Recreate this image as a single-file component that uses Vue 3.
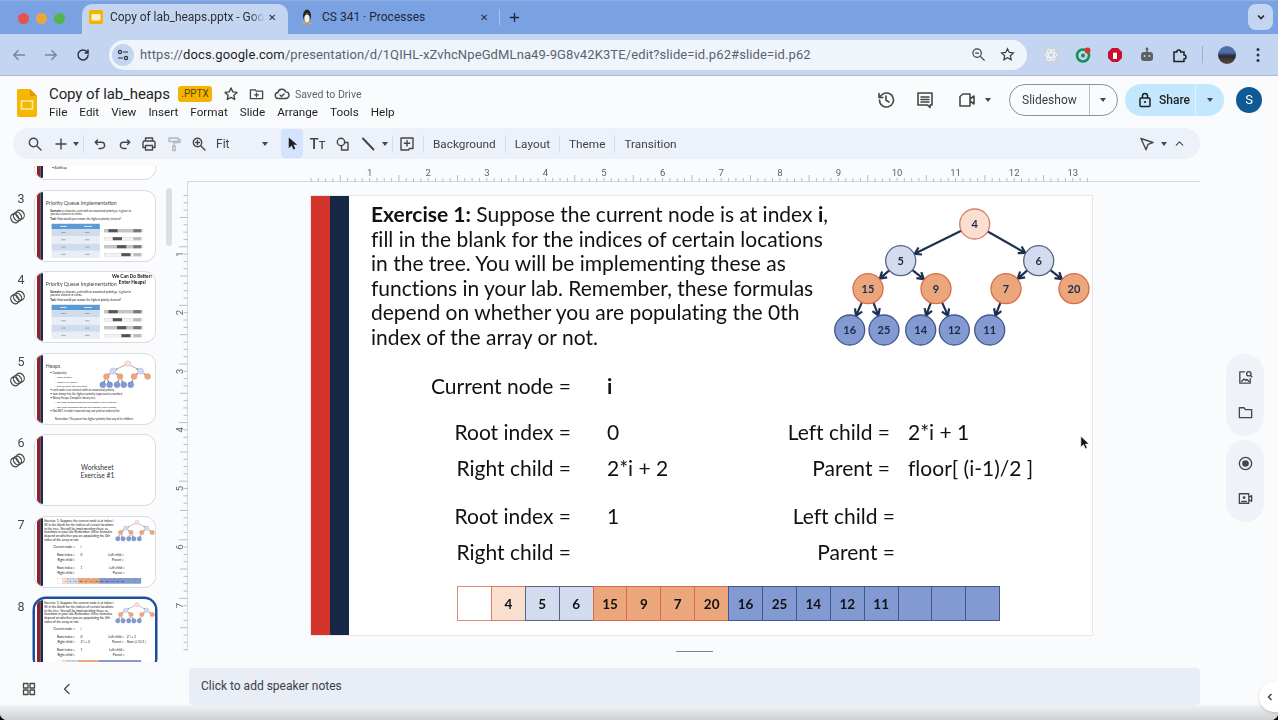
<template>
  <div class="window">
    <!-- browser tabs -->
    <div class="tabstrip">
      <div class="traffic"><i class="red"></i><i class="amber"></i><i class="green"></i></div>
      <div class="tab active">
        <svg class="favicon" viewBox="0 0 14 14"><rect width="14" height="14" rx="2" fill="#f4b400"/><rect x="2.5" y="4" width="9" height="6.5" rx=".6" fill="#fdf3d0"/></svg>
        <span class="tab-title fade">Copy of lab_heaps.pptx - Goo</span>
        <span class="tab-x">✕</span>
      </div>
      <div class="tab second-tab">
        <svg class="favicon" viewBox="0 0 14 16">
          <ellipse cx="7" cy="7" rx="4" ry="6.5" fill="#222"/><ellipse cx="7" cy="9.5" rx="2.7" ry="4" fill="#f4f1e6"/>
          <path d="M1.5 15 5 12.5 6 15.5zM12.5 15 9 12.5 8 15.5z" fill="#eda81f"/><path d="M6 4.2h2L7 5.4z" fill="#eda81f"/>
        </svg>
        <span class="tab-title">CS 341 · Processes</span>
        <span class="tab-x">✕</span>
      </div>
      <span class="tab-sep"></span>
      <svg class="new-tab" viewBox="0 0 12 12"><path d="M6 1v10M1 6h10"/></svg>
      <div class="tab-menu"><svg viewBox="0 0 12 12"><path d="m3 4.5 3 3 3-3"/></svg></div>
    </div>

    <!-- address bar -->
    <div class="addressbar">
      <svg class="nav dim" viewBox="0 0 16 16"><path d="M14 8H3M7.5 3.2 2.8 8l4.7 4.8"/></svg>
      <svg class="nav dim" viewBox="0 0 16 16"><path d="M2 8h11M8.5 3.2 13.2 8l-4.7 4.8"/></svg>
      <svg class="nav" viewBox="0 0 16 16"><path d="M13 8a5 5 0 1 1-1.5-3.6L13 6V2.5M13 6H9.6"/></svg>
      <div class="omnibox">
        <span class="site-info">
          <svg viewBox="0 0 14 14"><circle cx="4" cy="4" r="1.6"/><path d="M7 4h5M2 10h5"/><circle cx="10" cy="10" r="1.6"/></svg>
        </span>
        <span class="url">https://<b>docs.google.com</b>/presentation/d/1QIHL-xZvhcNpeGdMLna49-9G8v42K3TE/edit?slide=id.p62#slide=id.p62</span>
        <svg class="omni-icon first" viewBox="0 0 16 16"><circle cx="6.5" cy="6.5" r="4.5"/><path d="m10 10 4.5 4.5M4.5 6.5h4"/></svg>
        <svg class="omni-icon" viewBox="0 0 16 16"><path d="m8 1.8 1.9 4 4.4.5-3.3 3 .9 4.4L8 11.5l-3.9 2.2.9-4.4-3.3-3 4.4-.5z"/></svg>
      </div>
      <div class="extensions">
        <span class="ext"><svg viewBox="0 0 16 16"><rect width="16" height="16" rx="1" fill="#c9d2e0"/><g fill="none" stroke="#f3f6fb"><ellipse cx="8" cy="8" rx="6" ry="2.4"/><ellipse cx="8" cy="8" rx="6" ry="2.4" transform="rotate(60 8 8)"/><ellipse cx="8" cy="8" rx="6" ry="2.4" transform="rotate(120 8 8)"/></g></svg></span>
        <span class="ext"><svg viewBox="0 0 16 16"><circle cx="8" cy="8.5" r="6" fill="none" stroke="#12925a" stroke-width="2.6"/><circle cx="8" cy="8.5" r="2" fill="#12925a"/><circle cx="12.5" cy="3.5" r="3" fill="#d9352f"/></svg></span>
        <span class="ext"><svg viewBox="0 0 16 16"><path d="M5 1h6l4 4v6l-4 4H5l-4-4V5z" fill="#c8102e"/><path d="M6 12V6.5a1 1 0 0 1 2 0 1 1 0 0 1 2 0V12z" fill="#fff"/></svg></span>
        <span class="ext"><svg viewBox="0 0 16 16"><rect x="2" y="5" width="12" height="9" rx="3" fill="#5c6168"/><rect x="7.2" y="2" width="1.6" height="3" fill="#5c6168"/><circle cx="8" cy="2" r="1.4" fill="#5c6168"/><circle cx="5.6" cy="9" r="1" fill="#c3d5f1"/><circle cx="10.4" cy="9" r="1" fill="#c3d5f1"/></svg></span>
        <span class="ext"><svg viewBox="0 0 16 16"><path d="M3 5h2.8a2 2 0 1 1 4 0H13v3a2 2 0 1 1 0 4v2.5H3z" fill="none" stroke="#1f1f1f" stroke-width="1.5"/></svg></span>
        <span class="ext-sep"></span>
        <span class="profile"></span>
        <svg class="dots" viewBox="0 0 4 16"><circle cx="2" cy="2.5" r="1.5"/><circle cx="2" cy="8" r="1.5"/><circle cx="2" cy="13.5" r="1.5"/></svg>
      </div>
    </div>

    <!-- docs header -->
    <header class="docheader">
      <svg class="logo" viewBox="0 0 20 28"><path d="M2 0h11l7 7v19a2 2 0 0 1-2 2H2a2 2 0 0 1-2-2V2a2 2 0 0 1 2-2z" fill="#f6b704"/><path d="M13 0l7 7h-7z" fill="#f09300"/><rect x="4.5" y="12" width="11" height="8" fill="none" stroke="#fdeaa8" stroke-width="1.6"/></svg>
      <div class="doc-meta">
        <div class="doc-title-row">
          <span class="doc-title">Copy of lab_heaps</span>
          <span class="badge">.PPTX</span>
          <svg class="ic star" viewBox="0 0 16 16"><path d="m8 2 1.8 3.9 4.2.5-3.1 2.9.8 4.2L8 11.4l-3.7 2.1.8-4.2L2 6.4l4.2-.5z"/></svg>
          <svg class="ic folder" viewBox="0 0 16 16"><path d="M1.5 3.5h5l1.3 1.5h6.7v8h-13zM8 7v4M6 9h4"/></svg>
          <svg class="ic cloud" viewBox="0 0 16 16"><path d="M4.5 12.5a3 3 0 0 1-.5-6 4 4 0 0 1 7.7-.6 3.3 3.3 0 0 1 0 6.6zM6 9l1.5 1.5L10 8"/></svg>
          <span class="saved">Saved to Drive</span>
        </div>
        <nav class="menu"><span v-for="m in menus" :key="m">{{ m }}</span></nav>
      </div>
      <div class="doc-actions">
        <svg class="ic big" viewBox="0 0 20 20"><path d="M3.5 10a7 7 0 1 0 2.1-5L3 7.5M3 3.5v4h4M10 6v4.3l3 1.7"/></svg>
        <svg class="ic big comment" viewBox="0 0 20 20"><path d="M3 3h14v12h-2v2.500l-2.500-2.500H3zM6 7h8M6 9.500h8M6 12h8"/></svg>
        <svg class="ic big meet" viewBox="0 0 20 20"><path d="M3 6.500 6 4h7v12H3zM13 9l4-3v8l-4-3"/></svg>
        <span class="caret meet-caret"></span>
        <div class="slideshow"><span class="ss-label">Slideshow</span><span class="ss-drop"><i class="caret"></i></span></div>
        <div class="share">
          <svg viewBox="0 0 14 16"><rect x="2" y="6" width="10" height="8.500" rx="1" fill="none" stroke="#1f1f1f" stroke-width="1.500"/><path d="M4.500 6V4a2.500 2.500 0 0 1 5 0v2" fill="none" stroke="#1f1f1f" stroke-width="1.500"/><circle cx="7" cy="10" r="1.100" fill="#1f1f1f"/></svg>
          <span class="share-label">Share</span>
          <span class="share-drop"><i class="caret"></i></span>
        </div>
        <span class="account">S</span>
      </div>
    </header>

    <!-- toolbar -->
    <div class="toolbar">
      <button class="tb"><svg class="ic" viewBox="0 0 16 16"><circle cx="6.500" cy="6.500" r="4.200"/><path d="m9.700 9.700 4.300 4.300"/></svg></button>
      <button class="tb plus"><svg class="ic" viewBox="0 0 16 16"><path d="M8 3v10M3 8h10"/></svg></button>
      <i class="caret tb-caret"></i>
      <span class="sep"></span>
      <button class="tb undo"><svg class="ic" viewBox="0 0 16 16"><path d="M5.500 4 3.200 6.300l2.300 2.300M3.500 6.300h6a3 3 0 0 1 0 6.200H7"/></svg></button>
      <button class="tb"><svg class="ic" viewBox="0 0 16 16"><path d="M10.500 4l2.300 2.300-2.300 2.300M12.500 6.300h-6a3 3 0 0 0 0 6.200H9"/></svg></button>
      <button class="tb print"><svg class="ic" viewBox="0 0 16 16"><path d="M4.500 5V2h7v3M4.500 11.500H2V6.500A1.500 1.500 0 0 1 3.500 5h9A1.500 1.500 0 0 1 14 6.500v5h-2.500M4.500 9.500h7V14h-7z"/></svg></button>
      <button class="tb"><svg class="ic faint" viewBox="0 0 16 16"><path d="M3 2h9v3.500H3zM12 3.500h2v3H8V10M6.800 10h2.400v4.500H6.800z"/></svg></button>
      <button class="tb"><svg class="ic" viewBox="0 0 16 16"><circle cx="6.500" cy="6.500" r="4.200"/><path d="m9.700 9.700 4.300 4.300M4.500 6.500h4M6.500 4.500v4"/></svg></button>
      <span class="fit">Fit</span>
      <i class="caret fit-caret"></i>
      <button class="tb pointer"><svg viewBox="0 0 16 16"><path d="M4 1.500v11.500l3-2.800 2 4.300 2-.9-2-4.200h4z" fill="#1f1f1f"/></svg></button>
      <button class="tb text-box"><span>T</span><small>T</small></button>
      <button class="tb"><svg class="ic" viewBox="0 0 16 16"><circle cx="6" cy="6" r="3.700"/><path d="M9.500 6.500H13V14H6.500V10"/></svg></button>
      <button class="tb"><svg class="ic thick" viewBox="0 0 16 16"><path d="m3 2.500 10.500 11"/></svg></button>
      <i class="caret line-caret"></i>
      <span class="sep line-sep"></span>
      <button class="tb addbox"><svg class="ic" viewBox="0 0 16 16"><path d="M2 2h12v10.500h-3.500l-1 1.500H2zM8 4.500v5.500M5.300 7.300h5.400"/></svg></button>
      <span class="sep"></span>
      <template v-for="(label, i) in toolLabels" :key="label">
        <span class="tool-label">{{ label }}</span>
        <span v-if="i < toolLabels.length - 1" class="sep"></span>
      </template>
      <div class="tb-right">
        <svg class="ic" viewBox="0 0 16 16"><path d="m2 2.500 12 4-5 1.800-2 5.500z"/></svg>
        <i class="caret"></i>
        <svg class="ic chev" viewBox="0 0 16 16"><path d="m4 10 4-4 4 4"/></svg>
      </div>
    </div>

    <!-- editor -->
    <div class="workspace">
      <aside class="filmstrip">
        <div class="thumb-list">
          <div v-for="t in thumbs" :key="t.n" class="thumb-row">
            <div class="thumb-side">
              <span v-if="t.n > 2" class="thumb-no">{{ t.n }}</span>
              <svg v-if="t.linked" class="rings" viewBox="0 0 18 16"><g transform="rotate(-35 9 8)" fill="none" stroke="#444746" stroke-width="1.300"><ellipse cx="5.500" cy="8" rx="4" ry="5"/><ellipse cx="9" cy="8" rx="4" ry="5"/><ellipse cx="12.500" cy="8" rx="4" ry="5"/></g></svg>
            </div>
            <div class="thumb" :class="{ selected: t.n === 8 }">
              <svg viewBox="0 0 781 439">
                <rect width="781" height="439" fill="#fff"/>
                <rect x="13" y="0" width="24" height="439" fill="#8a2530"/>
                <rect x="37" y="0" width="15" height="439" fill="#1a2a4a"/>
                <text v-if="t.kind === 'cut'" x="110" y="385" class="t-body">• BuildHeap</text>
                <g v-if="t.kind === 'queue'">
                  <text x="70" y="85" class="t-title">Priority Queue Implementation</text>
                  <text x="100" y="127" class="t-body"><tspan font-weight="700">Scenario:</tspan> n elements, each with an associated priority pᵢ, is given to</text>
                  <text x="100" y="148" class="t-body">you one element at a time.</text>
                  <text x="100" y="180" class="t-body"><tspan font-weight="700">Task:</tspan> How would you remove the highest priority element?</text>
                  <rect x="108" y="205" width="314" height="35" fill="#5b9bd5"/>
                  <rect x="165" y="219" width="40" height="6" fill="#e8f0fa"/>
                  <rect x="320" y="219" width="50" height="6" fill="#e8f0fa"/>
                  <g v-for="r in 4" :key="r">
                    <rect x="108" :y="193 + r * 47" width="314" height="47" :fill="r % 2 ? '#cfdcec' : '#e8eef6'"/>
                    <rect x="170" :y="213 + r * 47" width="30" height="5" fill="#8a97a8"/>
                    <rect x="325" :y="213 + r * 47" width="30" height="5" fill="#8a97a8"/>
                  </g>
                  <g v-for="r in 4" :key="'bar' + r">
                    <rect x="450" :y="188 + r * 52" width="250" height="20" :fill="r % 2 ? '#c4c4c4' : '#f2f2f2'" stroke="#999"/>
                    <rect :x="450 + r * 28" :y="188 + r * 52" width="60" height="20" fill="#555"/>
                    <rect x="640" :y="188 + r * 52" width="50" height="20" :fill="r % 2 ? '#777' : '#bbb'"/>
                  </g>
                  <g v-if="t.n === 4">
                    <text x="760" y="32" text-anchor="end" class="t-better">We Can Do Better!</text>
                    <text x="722" y="72" text-anchor="end" class="t-better">Enter Heaps!</text>
                  </g>
                </g>
                <g v-if="t.kind === 'heaps'">
                  <text x="70" y="85" class="t-title">Heaps</text>
                  <text v-for="(l, i) in heapsLines" :key="i" :x="l.x" :y="124 + i * 27" class="t-body" :class="{ 't-sub': l.x > 100 }">{{ l.text }}</text>
                  <text x="130" y="420" class="t-body" font-weight="700">Remember: The parent has higher priority than any of its children</text>
                </g>
                <g v-if="t.kind === 'worksheet'">
                  <text x="406" y="220" text-anchor="middle" class="t-sheet">Worksheet</text>
                  <text x="406" y="272" text-anchor="middle" class="t-sheet">Exercise #1</text>
                </g>
                <g v-if="t.kind === 'exercise'">
                  <text v-for="(line, i) in introLines" :key="i" x="60" :y="25 + i * 24.600" class="t-ex">{{ line }}</text>
                  <text v-for="(r, i) in thumbRows(t.n)" :key="i" :x="r.x" :y="r.y" :text-anchor="r.anchor" class="t-ex">{{ r.label }}</text>
                  <g v-for="(c, i) in cells" :key="i">
                    <rect :x="146 + i * 34" y="390" width="34" height="35" :fill="c.fill" :stroke="c.stroke"/>
                    <text :x="163 + i * 34" y="413" text-anchor="middle" class="t-cell">{{ c.v }}</text>
                  </g>
                </g>
                <g v-if="t.kind === 'exercise' || t.kind === 'heaps'" :transform="t.kind === 'heaps' ? 'translate(-259 18) scale(1.3)' : ''">
                  <path v-for="(e, i) in edges" :key="i" :d="e" fill="none" stroke="#1e3050" stroke-width="2"/>
                  <circle v-for="n in nodes" :key="n.v" :cx="n.x" :cy="n.y" r="15" :fill="n.fill" :stroke="n.stroke"/>
                </g>
              </svg>
            </div>
          </div>
        </div>
        <div class="strip-scroll"></div>
        <div class="strip-foot">
          <svg class="ic" viewBox="0 0 14 14"><path d="M1.500 1.500h4.500v4.500H1.500zM8 1.500h4.500v4.500H8zM1.500 8h4.500v4.500H1.500zM8 8h4.500v4.500H8z"/></svg>
          <svg class="ic back" viewBox="0 0 14 14"><path d="M9 2.500 4.500 7 9 11.500"/></svg>
        </div>
      </aside>

      <svg class="ruler-v" width="14" height="470" viewBox="0 0 14 470">
        <path d="M13.500 0v470" stroke="#d3d6dc" fill="none"/>
        <path v-for="k in 64" :key="k" :d="`M${k % 8 === 0 ? 5 : k % 4 === 0 ? 6 : 9.500} ${14.500 + (k - 1) * 7.325}H13.500`" stroke="#b9bcc2" fill="none"/>
        <text v-for="n in 7" :key="n" :transform="`translate(9 ${14.500 + n * 58.600}) rotate(-90)`" text-anchor="middle" class="ruler-text">{{ n }}</text>
      </svg>

      <div class="editor">
        <svg class="ruler-h" width="1012" height="22" viewBox="0 0 1012 22">
          <path d="M0 21.500h1012" stroke="#d3d6dc" fill="none"/>
          <path v-for="k in 107" :key="k" :d="`M${123 + (k - 1) * 7.325} ${(k - 1) % 8 === 4 ? 15 : 18}V21.500`" stroke="#b9bcc2" fill="none"/>
          <text v-for="n in 13" :key="n" :x="123 + n * 58.600" y="16" text-anchor="middle" class="ruler-text">{{ n }}</text>
        </svg>

        <section class="slide">
          <div class="stripes"><i class="stripe-red"></i><i class="stripe-navy"></i></div>
          <div class="slide-body">
            <div class="slide-top">
              <p class="intro">
                <template v-for="(line, i) in introMain" :key="i"><b v-if="line.lead">{{ line.lead }}</b> {{ line.text }}<b v-if="line.tail">{{ line.tail }}</b>{{ line.end }}<br></template>
              </p>
              <svg class="tree" width="261" height="160" viewBox="520 0 261 160">
                <path v-for="(e, i) in edges" :key="i" :d="e" fill="none" stroke="#1e3050" stroke-width="2.200"/>
                <g v-for="n in nodes" :key="n.v">
                  <circle :cx="n.x" :cy="n.y" r="15" :fill="n.fill" :stroke="n.stroke" stroke-width="1.300"/>
                  <text :x="n.x" :y="n.y + 4" text-anchor="middle" class="node-text">{{ n.v }}</text>
                </g>
              </svg>
            </div>

            <div class="row-grid current"><span class="lbl">Current node =</span><b class="val">i</b></div>
            <div class="row-grid first">
              <span class="lbl">Root index =</span><span class="val">0</span><span class="lbl">Left child =</span><span class="val end">2*i + 1</span>
              <span class="lbl">Right child =</span><span class="val">2*i + 2</span><span class="lbl">Parent =</span><span class="val end">floor[ (i-1)/2 ]</span>
            </div>
            <div class="row-grid second">
              <span class="lbl">Root index =</span><span class="val">1</span><span class="lbl">Left child =</span><span class="val end"></span>
              <span class="lbl">Right child =</span><span class="val"></span><span class="lbl">Parent =</span><span class="val end"></span>
            </div>

            <div class="heap-array">
              <span v-for="(c, i) in cells" :key="i" class="cell" :style="{ background: c.fill, borderColor: c.stroke }">{{ c.v }}</span>
            </div>
          </div>
        </section>

        <div class="notes-handle"></div>
        <div class="notes">Click to add speaker notes</div>
      </div>

      <aside class="rail">
        <div class="rail-pill">
          <svg class="ic" viewBox="0 0 18 18"><path d="M8 3H3v12h11V10M5 13l2.500-2.500 1.500 1.500 1.500-1 2 2"/><circle cx="12.500" cy="5" r="2.300"/><path d="m14.300 6.800 1.500 1.500"/></svg>
          <svg class="ic" viewBox="0 0 18 18"><path d="M2.500 4h5l1.500 2h6.500v8.500h-13z"/></svg>
        </div>
        <div class="rail-pill">
          <svg class="ic" viewBox="0 0 18 18"><circle cx="9" cy="9" r="6.500"/><circle cx="9" cy="9" r="3.500" fill="#444746" stroke="none"/></svg>
          <svg class="ic" viewBox="0 0 18 18"><path d="M2.500 4h10v10h-10zM12.500 8l3-2v6l-3-2"/><circle cx="7.500" cy="8" r="1.500" fill="#444746" stroke="none"/><path d="M5 12h5"/></svg>
        </div>
      </aside>
    </div>

    <div class="bottom-edge"></div>

    <!-- overlays -->
    <button class="collapse"><svg viewBox="0 0 12 12"><path d="M7.500 3 4.500 6l3 3"/></svg></button>
    <svg class="mouse" viewBox="0 0 12 18"><path d="M1 1v13l3.300-3 2.200 5 2.200-1-2.200-4.800H11z" fill="#111" stroke="#fff" stroke-width=".7"/></svg>
  </div>
</template>

<script setup>
const menus = ['File', 'Edit', 'View', 'Insert', 'Format', 'Slide', 'Arrange', 'Tools', 'Help']
const toolLabels = ['Background', 'Layout', 'Theme', 'Transition']

const introLines = [
  'Exercise 1: Suppose the current node is at index i,',
  'fill in the blank for the indices of certain locations',
  'in the tree. You will be implementing these as',
  'functions in your lab. Remember, these formulas',
  'depend on whether you are populating the 0th',
  'index of the array or not.'
]
const introMain = [
  { lead: 'Exercise 1:', text: 'Suppose the current node is at index ', tail: 'i', end: ',' },
  { text: 'fill in the blank for the indices of certain locations' },
  { text: 'in the tree. You will be implementing these as' },
  { text: 'functions in your lab. Remember, these formulas' },
  { text: 'depend on whether you are populating the 0th' },
  { text: 'index of the array or not.' }
]

const heapsLines = [
  { x: 100, text: '• Complexity' },
  { x: 130, text: '– insert:   O(log n)' },
  { x: 130, text: '– removeMin:   O(log n)' },
  { x: 130, text: '– buildUp heap: O(n) (One-time)' },
  { x: 100, text: '• each node is an element with an associated priority' },
  { x: 100, text: '• root always has the highest priority (expressed as number)' },
  { x: 100, text: '• Binary Heaps: Complete binary tree' },
  { x: 130, text: '– min-heap: minimum between two numbers, root is smallest' },
  { x: 130, text: '– max-heap: maximum between two numbers, root is largest' },
  { x: 100, text: '• Not BST: in-order traversal may not yield an ordered list' }
]

const palette = {
  peach: ['#f8dfd0', '#dc7b68'],
  light: ['#d3dcef', '#566483'],
  orange: ['#eca67b', '#d96a4c'],
  blue: ['#8299d2', '#41578a'],
  blank: ['#ffffff', '#dc8a7c']
}

const rawNodes = [
  [4, 663.7, 28, 'peach'], [5, 589.7, 64.7, 'light'], [6, 727.7, 64.7, 'light'],
  [15, 557, 92.7, 'orange'], [9, 625, 92.7, 'orange'], [7, 695, 92.7, 'orange'], [20, 763, 92.7, 'orange'],
  [16, 538.7, 134, 'blue'], [25, 573, 134, 'blue'], [14, 609.7, 134, 'blue'], [12, 643.3, 134, 'blue'], [11, 678.7, 134, 'blue']
]
const nodes = rawNodes.map(([v, x, y, c]) => ({ v, x, y, fill: palette[c][0], stroke: palette[c][1] }))

// parent -> child, shortened to the circle edge, with an open arrow head
const links = [[4, 5], [4, 6], [5, 15], [5, 9], [6, 7], [6, 20], [15, 16], [15, 25], [9, 14], [9, 12], [7, 11]]
const edges = links.map(([a, b]) => {
  const p = nodes.find(n => n.v === a)
  const c = nodes.find(n => n.v === b)
  const len = Math.hypot(c.x - p.x, c.y - p.y)
  const ux = (c.x - p.x) / len
  const uy = (c.y - p.y) / len
  const sx = p.x + ux * 15
  const sy = p.y + uy * 15
  const ex = c.x - ux * 15.5
  const ey = c.y - uy * 15.5
  const h = (ang) => {
    const cos = Math.cos(ang)
    const sin = Math.sin(ang)
    return `${ex - 7.5 * (ux * cos - uy * sin)} ${ey - 7.5 * (ux * sin + uy * cos)}`
  }
  return `M${sx} ${sy}L${ex} ${ey}M${h(0.55)}L${ex} ${ey}L${h(-0.55)}`
})

const cellKinds = ['blank', 'peach', 'light', 'light', 'orange', 'orange', 'orange', 'orange', 'blue', 'blue', 'blue', 'blue', 'blue', 'blue', 'blue', 'blue']
const cellValues = ['', 4, 5, 6, 15, 9, 7, 20, 16, 25, 14, 12, 11, '', '', '']
const cells = cellKinds.map((k, i) => ({ v: cellValues[i], fill: palette[k][0], stroke: palette[k][1] }))

const thumbs = [
  { n: 2, kind: 'cut' },
  { n: 3, kind: 'queue', linked: true },
  { n: 4, kind: 'queue', linked: true },
  { n: 5, kind: 'heaps', linked: true },
  { n: 6, kind: 'worksheet', linked: true },
  { n: 7, kind: 'exercise' },
  { n: 8, kind: 'exercise' }
]

const thumbRows = (n) => {
  const rows = [
    { label: 'Current node =', x: 260, y: 196, anchor: 'end' },
    { label: 'i', x: 296, y: 196, anchor: 'start' },
    { label: 'Root index =', x: 260, y: 243, anchor: 'end' },
    { label: '0', x: 296, y: 243, anchor: 'start' },
    { label: 'Right child =', x: 260, y: 279, anchor: 'end' },
    { label: 'Left child =', x: 579, y: 243, anchor: 'end' },
    { label: 'Parent =', x: 579, y: 279, anchor: 'end' },
    { label: 'Root index =', x: 260, y: 327, anchor: 'end' },
    { label: '1', x: 296, y: 327, anchor: 'start' },
    { label: 'Right child =', x: 260, y: 363, anchor: 'end' },
    { label: 'Left child =', x: 584, y: 327, anchor: 'end' },
    { label: 'Parent =', x: 584, y: 363, anchor: 'end' }
  ]
  if (n === 8) {
    rows.push({ label: '2*i + 2', x: 296, y: 279, anchor: 'start' })
    rows.push({ label: '2*i + 1', x: 597, y: 243, anchor: 'start' })
    rows.push({ label: 'floor[ (i-1)/2 ]', x: 597, y: 279, anchor: 'start' })
  }
  return rows
}
</script>

<style>
html, body { margin: 0; background: #000; }
</style>

<style scoped>
.window {
  position: relative;
  width: 1278px;
  height: 720px;
  overflow: hidden;
  display: flex;
  flex-direction: column;
  background: #f9fbfd;
  border-radius: 0 0 7px 7px;
  font-family: Roboto, "Liberation Sans", sans-serif;
  color: #1f1f1f;
  filter: blur(0.35px);
}
button { border: 0; padding: 0; background: none; font: inherit; }
svg { display: block; flex: none; }
.ic { width: 16px; height: 16px; fill: none; stroke: #444746; stroke-width: 1.4; stroke-linejoin: round; stroke-linecap: round; }
.ic.thick { stroke-width: 2; }
.ic.faint { stroke: #b4b7bc; }
.caret { display: inline-block; width: 0; height: 0; border: 3.500px solid transparent; border-top: 4px solid #444746; border-bottom: 0; flex: none; }

/* tab strip */
.tabstrip { height: 34px; background: #7aa2e2; display: flex; align-items: flex-end; flex: none; border-top: 1px solid #8eaee0; box-sizing: border-box; }
.traffic { display: flex; gap: 7px; width: 82px; padding-left: 18px; box-sizing: border-box; align-self: center; margin-top: 1px; }
.traffic i { width: 11px; height: 11px; border-radius: 50%; }
.traffic .red { background: #e9524a; }
.traffic .amber { background: #eba73b; }
.traffic .green { background: #4fb647; }
.tab { width: 206px; height: 30px; display: flex; align-items: center; box-sizing: border-box; padding: 0 9px 4px 7px; font-size: 12px; color: #2a2f38; flex: none; }
.tab.active { background: #c3d5f1; border-radius: 10px 10px 0 0; padding-bottom: 4px; }
.favicon { width: 14px; height: 14px; margin-right: 7px; }
.second-tab { color: #20293a; padding-right: 3px; }
.second-tab .favicon { margin-left: 5px; height: 16px; margin-right: 8px; }
.tab-title { flex: 1; white-space: nowrap; overflow: hidden; }
.fade { letter-spacing: -0.05px; -webkit-mask-image: linear-gradient(90deg, #000 90%, transparent 100%); mask-image: linear-gradient(90deg, #000 90%, transparent 100%); }
.tab-x { font-size: 10px; width: 14px; text-align: center; color: #26303f; flex: none; }
.tab-sep { width: 1px; height: 16px; background: #a9c3ec; margin: 0 0 9px 5px; flex: none; }
.new-tab { width: 11px; height: 11px; margin: 0 0 11px 9px; fill: none; stroke: #1d2735; stroke-width: 1.500; }
.tab-menu { margin-left: auto; margin-right: 5px; margin-bottom: 4px; width: 25px; height: 26px; background: #c3d5f1; border-radius: 8px; display: flex; align-items: center; justify-content: center; }
.tab-menu svg { width: 12px; height: 12px; fill: none; stroke: #1d2735; stroke-width: 1.600; }

/* address bar */
.addressbar { height: 42px; background: #c3d5f1; display: flex; align-items: center; flex: none; border-bottom: 1px solid #a9b8d0; box-sizing: border-box; padding-left: 11px; }
.nav { width: 16px; height: 16px; fill: none; stroke: #2c3440; stroke-width: 1.500; margin-right: 16px; }
.nav.dim { stroke: #7b8798; }
.omnibox { width: 918px; height: 30px; margin-left: 2px; background: #f0f5fc; border-radius: 15px; display: flex; align-items: center; padding-left: 2px; box-sizing: border-box; }
.site-info { width: 22px; height: 22px; border-radius: 50%; background: #c3d5f1; display: flex; align-items: center; justify-content: center; margin-left: 1px; flex: none; }
.site-info svg { width: 14px; height: 14px; fill: none; stroke: #2c3440; stroke-width: 1.200; }
.url { margin-left: 6px; font-size: 13px; letter-spacing: 0.11px; white-space: nowrap; color: #5a6270; width: 800px; flex: none; }
.url b { font-weight: 400; color: #1f1f1f; }
.omni-icon { width: 15px; height: 15px; fill: none; stroke: #3a404a; stroke-width: 1.300; margin-left: 14px; }
.omni-icon.first { margin-left: 31px; margin-top: -1px; }
.extensions { display: flex; align-items: center; margin-left: 16px; }
.ext { width: 16px; height: 16px; margin-right: 16px; }
.ext svg { width: 16px; height: 16px; }
.ext-sep { width: 1px; height: 17px; background: #94b2e2; margin: 0 15px 0 -1px; }
.profile { width: 18px; height: 18px; border-radius: 50%; background: linear-gradient(180deg, #4f6fa8 0 35%, #2b2a33 55%, #5a4a3a 100%); }
.dots { width: 4px; height: 16px; fill: #2c3440; margin-left: 20px; }

/* docs header */
.docheader { height: 52px; flex: none; display: flex; align-items: center; padding: 0 0 0 17px; box-sizing: border-box; }
.logo { width: 20px; height: 28px; margin-right: 12px; margin-top: 1px; }
.doc-meta { display: flex; flex-direction: column; }
.doc-title-row { display: flex; align-items: center; height: 20px; }
.doc-title { font-size: 15px; letter-spacing: -0.1px; color: #1f1f1f; width: 129px; white-space: nowrap; }
.badge { background: #f4b400; color: #5b4300; font-size: 10px; border-radius: 3px; width: 34px; height: 16px; line-height: 16px; text-align: center; }
.ic.star { margin-left: 11px; }
.ic.folder { margin-left: 10px; width: 15px; }
.ic.cloud { margin-left: 10px; }
.saved { margin-left: 5px; font-size: 10.500px; color: #5f6368; }
.menu { display: flex; gap: 12px; font-size: 11.700px; color: #1f1f1f; height: 16px; align-items: center; }
.doc-actions { margin-left: auto; display: flex; align-items: center; padding-right: 16px; margin-top: -4px; }
.ic.big { width: 20px; height: 20px; stroke-width: 1.600; }
.ic.comment { margin-left: 19px; }
.ic.meet { margin-left: 22px; }
.meet-caret { margin-left: 8px; margin-right: 18px; }
.slideshow { width: 109px; height: 32px; border: 1px solid #8f9295; border-radius: 16px; box-sizing: border-box; display: flex; align-items: center; font-size: 12px; color: #3a3d42; }
.ss-label { padding-left: 12px; width: 80px; box-sizing: border-box; }
.ss-drop { width: 28px; height: 100%; border-left: 1px solid #b9bcc2; display: flex; align-items: center; justify-content: center; }
.share { width: 99px; height: 32px; border-radius: 16px; background: #c2e7ff; margin-left: 7px; display: flex; align-items: center; font-size: 12px; font-weight: 500; box-sizing: border-box; padding-left: 13px; }
.share svg { width: 14px; height: 16px; }
.share-label { margin-left: 7px; width: 36px; }
.share-drop { border-left: 1px solid #e4f3fd; height: 100%; flex: 1; display: flex; align-items: center; justify-content: center; }
.account { width: 26px; height: 26px; border-radius: 50%; background: #0e5a94; color: #fff; font-size: 13px; text-align: center; line-height: 26px; margin-left: 12px; }

/* toolbar */
.toolbar { height: 31px; flex: none; margin: 0 78px 0 13px; background: #edf2fa; border-radius: 16px; display: flex; align-items: center; padding-left: 9px; font-size: 12px; color: #3f4247; }
.tb { width: 25px; height: 25px; display: flex; align-items: center; justify-content: center; flex: none; }
.plus { margin-left: 1px; }
.undo { margin-left: -1px; }
.print { margin-left: -1px; }
.sep { width: 1px; height: 18px; background: #d8dde6; flex: none; margin: 0 4px; }
.fit { margin-left: 5px; width: 46px; flex: none; }
.fit-caret { margin-right: 13px; }
.pointer { background: #d3e3fd; width: 22px; height: 29px; border-radius: 4px; }
.pointer svg { width: 15px; height: 15px; }
.text-box { font-size: 15px; font-weight: 500; color: #444746; align-items: baseline; padding-top: 4px; box-sizing: border-box; margin-left: 2px; }
.text-box small { font-size: 11px; }
.line-caret { margin-left: 2px; }
.line-sep { margin-left: 4px; margin-right: 1px; }
.tool-label { padding: 0 5px; white-space: nowrap; font-size: 11.800px; }
.tb-right { margin-left: auto; margin-right: 14px; display: flex; align-items: center; gap: 6px; }
.tb-right .chev { width: 13px; height: 13px; }

/* workspace */
.workspace { flex: 1; display: flex; min-height: 0; margin-top: 1px; position: relative; }
.filmstrip { width: 174px; flex: none; position: relative; display: flex; flex-direction: column; }
.thumb-list { height: 496px; margin-top: 6px; overflow: hidden; flex: none; }
.thumb-row { display: flex; height: 70px; margin-bottom: 11.600px; }
.thumb-row:first-child { margin-top: -57px; }
.thumb-side { width: 35px; flex: none; position: relative; display: flex; flex-direction: column; align-items: center; }
.thumb-no { font-size: 12.500px; line-height: 15px; color: #444746; padding-left: 7px; }
.rings { width: 17px; height: 15px; margin-top: 3px; }
.thumb { width: 120px; height: 70px; border-radius: 11px; box-shadow: 0 0 0 1px #d8dbe1; overflow: hidden; background: #fff; flex: none; }
.thumb.selected { box-shadow: 0 0 0 2.500px #1f4e9e; }
.thumb svg { width: 120px; height: 70px; }
.t-title { font: 34px Lato, sans-serif; fill: #444; }
.t-body { font: 18px Lato, sans-serif; fill: #222; }
.t-sub { font-size: 15px; }
.t-better { font: 700 31px Lato, sans-serif; fill: #111; }
.t-sheet { font: 44px Lato, sans-serif; fill: #333; }
.t-ex { font: 21px Lato, sans-serif; fill: #111; }
.t-cell { font: 700 14px Lato, sans-serif; fill: #111; }
.strip-scroll { position: absolute; left: 166px; top: 28px; width: 5.500px; height: 58px; border-radius: 3px; background: #dcdfe5; }
.strip-foot { position: absolute; left: 22px; top: 522px; display: flex; align-items: center; gap: 24px; }
.strip-foot .ic { width: 14px; height: 14px; stroke-width: 1.300; }
.ruler-v { margin-top: 21px; }
.ruler-text { font: 9.500px Roboto, sans-serif; fill: #5f6368; }

.editor { width: 1012px; flex: none; display: flex; flex-direction: column; }
.ruler-h { margin-bottom: 14px; }
.slide { width: 781px; height: 439px; margin-left: 123px; background: #fff; display: flex; flex: none; box-shadow: 0 0 0 1px #e6e8ec; overflow: hidden; font-family: Lato, "Liberation Sans", sans-serif; color: #111; font-variant-ligatures: none; }
.stripes { display: flex; flex: none; }
.stripes i { display: block; height: 100%; }
.stripe-red { width: 19px; background: #d5342a; }
.stripe-navy { width: 19px; background: #162846; }
.slide-body { flex: 1; min-width: 0; font-size: 21px; }
.slide-top { display: flex; height: 153px; justify-content: space-between; }
.intro { margin: 0; padding: 6px 0 0 22px; line-height: 24.600px; white-space: nowrap; }
.node-text { font: 700 11px Lato, sans-serif; fill: #1b2a4a; }
.row-grid { display: grid; grid-template-columns: 222px 186px 133px 1fr; line-height: 36px; }
.row-grid .val { padding-left: 36px; white-space: nowrap; }
.row-grid .val.end { padding-left: 18px; }
.row-grid .lbl { text-align: right; white-space: nowrap; }
.current { margin-top: 19px; }
.first { margin-top: 10px; }
.second { margin-top: 12px; grid-template-columns: 222px 186px 138px 1fr; }
.heap-array { display: flex; margin: 16px 0 0 108px; }
.cell { width: 34.900px; height: 35px; border: 1px solid; box-sizing: border-box; display: flex; align-items: center; justify-content: center; font-size: 13.500px; font-weight: 700; color: #111; }
.cell + .cell { margin-left: -1px; }

.notes-handle { width: 37px; height: 1.500px; background: #80848b; margin: 15.500px 0 0 488px; flex: none; }
.notes { height: 37px; line-height: 37px; margin-top: 16px; background: #e9edf6; border-radius: 4px; padding-left: 12px; font-size: 12px; color: #3c4043; flex: none; margin-left: 1px; }

.rail { flex: 1; padding: 194px 0 0 26px; display: flex; flex-direction: column; gap: 4px; }
.rail-pill { width: 38px; height: 82px; border-radius: 19px; background: #eff2f8; display: flex; flex-direction: column; align-items: center; justify-content: center; gap: 18px; }
.rail-pill .ic { width: 17px; height: 17px; }

.bottom-edge { height: 15px; flex: none; background: linear-gradient(180deg, #f1f2f5 0%, #cfd0d2 100%); }
.collapse { position: absolute; left: 1259px; top: 682px; width: 34px; height: 30px; border-radius: 15px; background: #fff; box-shadow: 0 1px 3px rgba(0, 0, 0, .18); display: flex; align-items: center; padding-left: 5px; box-sizing: border-box; }
.collapse svg { width: 12px; height: 12px; fill: none; stroke: #444746; stroke-width: 1.500; }
.mouse { position: absolute; left: 1080px; top: 435px; width: 10px; height: 16px; }
</style>
